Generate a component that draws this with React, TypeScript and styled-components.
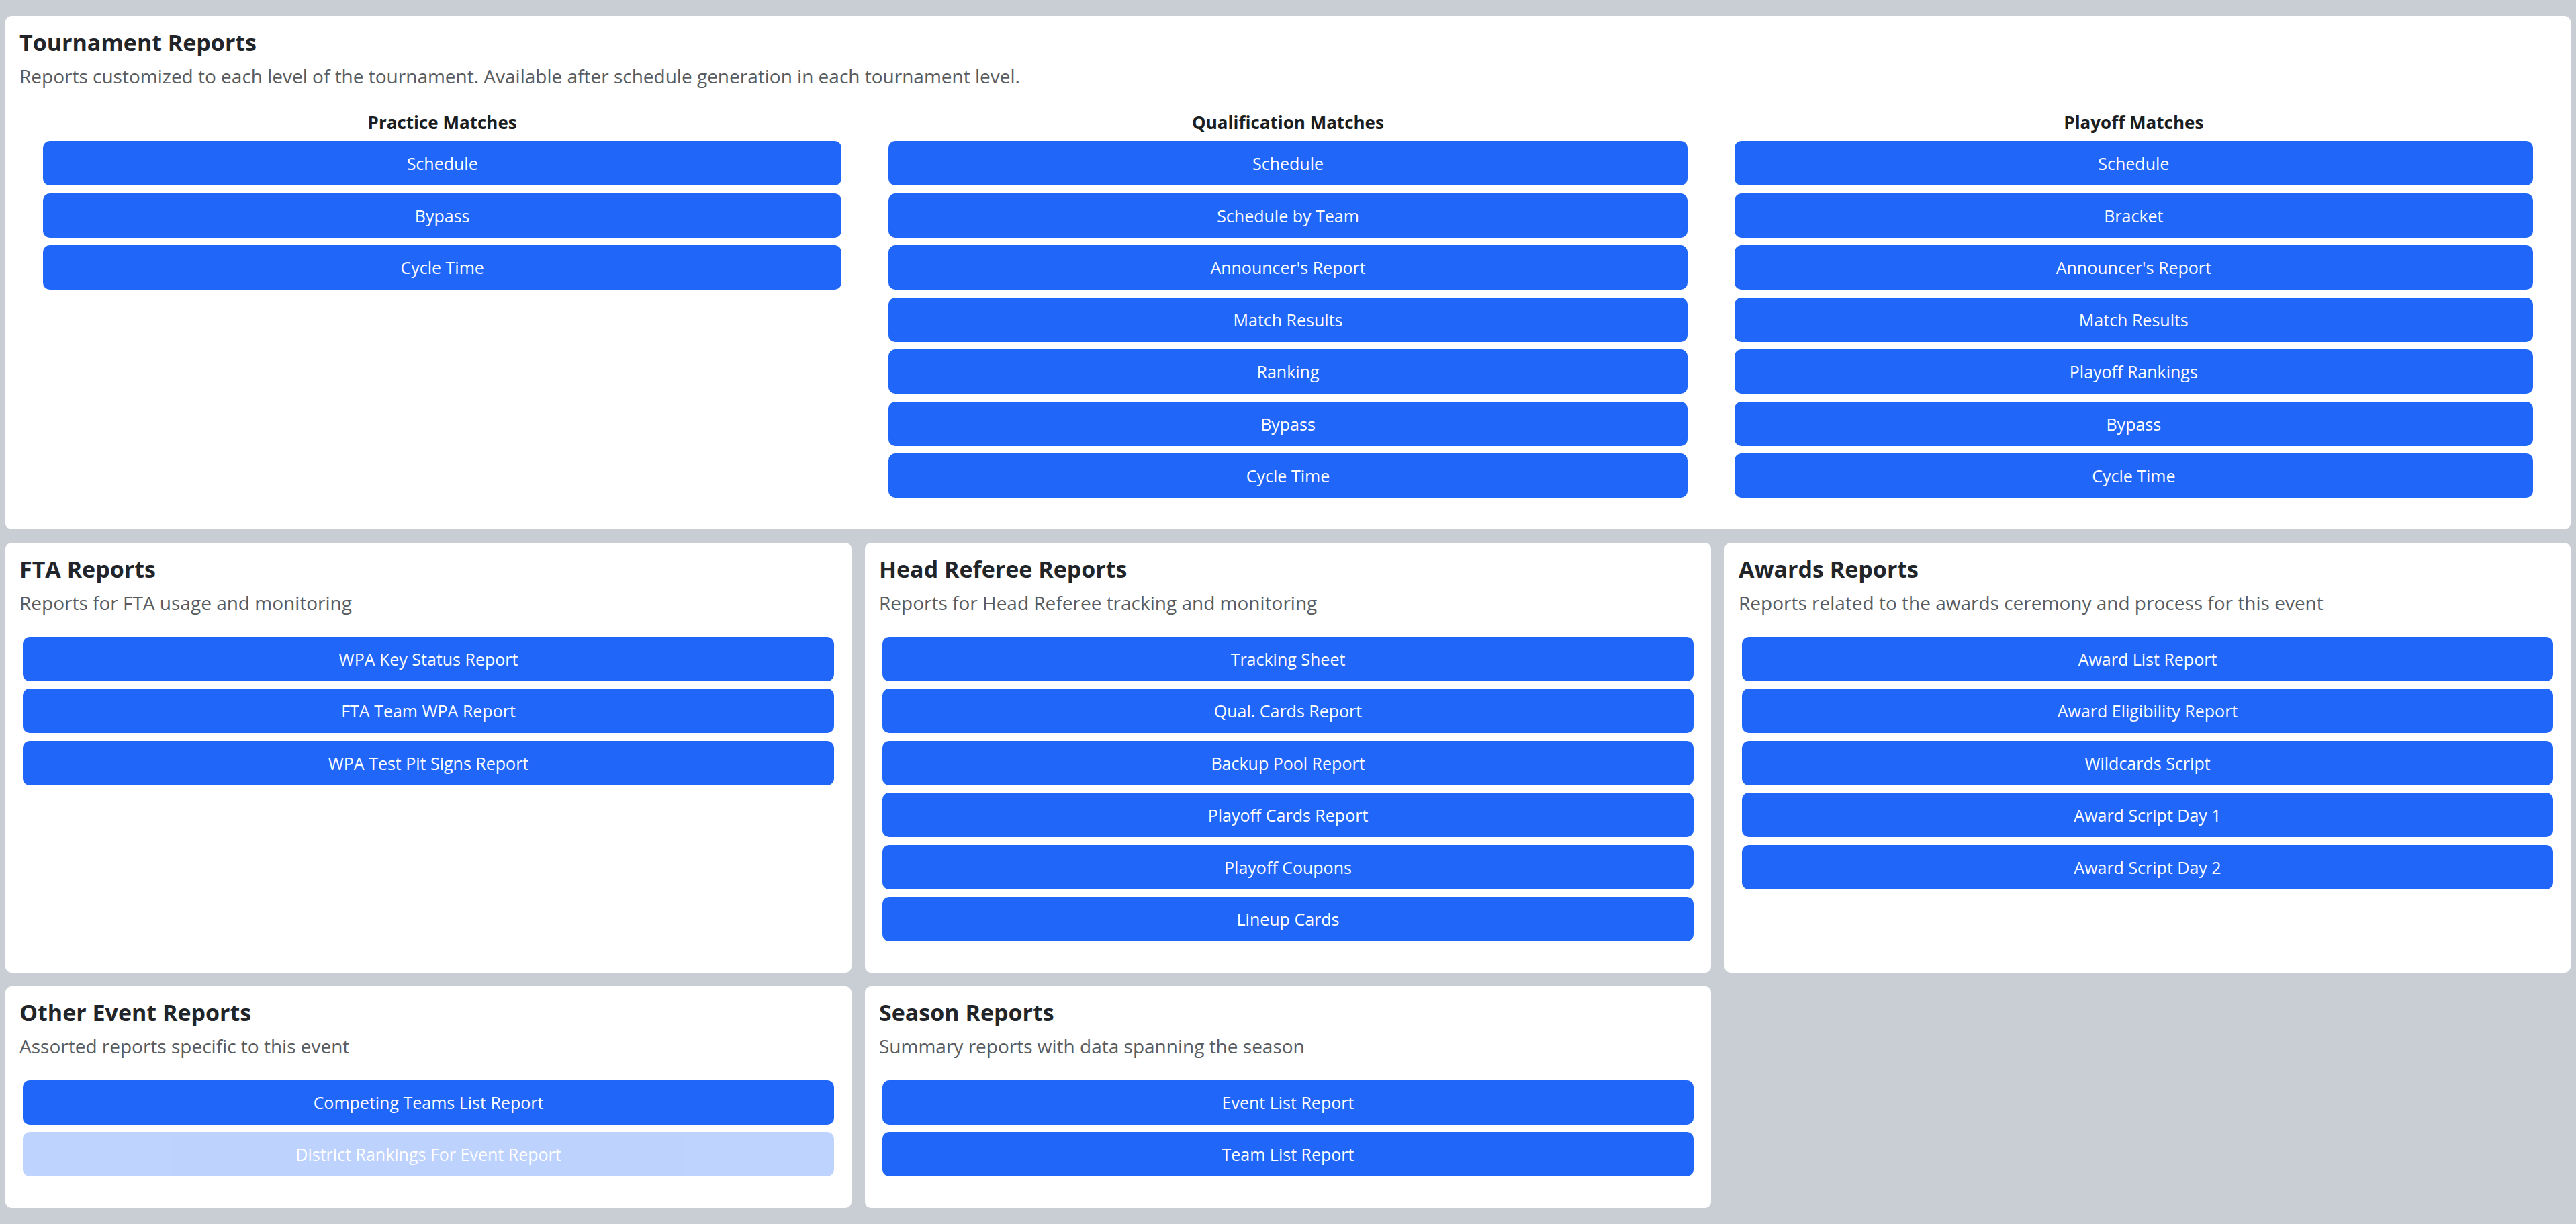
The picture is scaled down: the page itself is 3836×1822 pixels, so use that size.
import styled, { createGlobalStyle } from 'styled-components';

const GlobalStyle = createGlobalStyle`
  html, body { margin: 0; padding: 0; }
  body {
    background: #c9ced5;
    font-family: "Open Sans", "Noto Sans", Arial, sans-serif;
    color: #212529;
  }
`;

const Page = styled.div`
  min-height: 100vh;
  box-sizing: border-box;
  padding: 24px 8px 27px;
  display: flex;
  flex-direction: column;
  gap: 20px;
`;

const Card = styled.section`
  background: #fff;
  border-radius: 9px;
  padding: 17px 21px 35px;
  box-sizing: border-box;
  display: flex;
  flex-direction: column;
`;

const Title = styled.h2`
  margin: 0 0 8px;
  font-size: 34px;
  line-height: 44px;
  font-weight: 700;
  color: #212529;
`;

const Desc = styled.p`
  margin: 0 0 31px;
  font-size: 28px;
  line-height: 40px;
  color: #585c61;
`;

const Columns = styled.div`
  display: grid;
  grid-template-columns: repeat(3, 1fr);
`;

const Column = styled.div`
  padding: 0 35px;
  display: flex;
  flex-direction: column;
`;

const ColumnHead = styled.h3`
  margin: 0 0 10px;
  text-align: center;
  font-size: 26px;
  line-height: 36px;
  font-weight: 700;
  color: #1b1e21;
`;

const ButtonList = styled.div<{ $inset?: boolean }>`
  display: flex;
  flex-direction: column;
  padding: 0 ${(p) => (p.$inset ? '5px' : '0')};
`;

const ReportButton = styled.button`
  height: 66px;
  margin: 0 0 11.5px;
  border: none;
  border-radius: 10px;
  background: #1f66f9;
  color: #fff;
  font-family: inherit;
  font-size: 25px;
  cursor: pointer;
  &:disabled {
    opacity: 0.29;
    cursor: default;
  }
`;

const Grid = styled.div`
  display: grid;
  grid-template-columns: repeat(3, 1fr);
  gap: 20px;
`;

const tournament = [
  { head: 'Practice Matches', items: ['Schedule', 'Bypass', 'Cycle Time'] },
  {
    head: 'Qualification Matches',
    items: ['Schedule', 'Schedule by Team', "Announcer's Report", 'Match Results', 'Ranking', 'Bypass', 'Cycle Time'],
  },
  {
    head: 'Playoff Matches',
    items: ['Schedule', 'Bracket', "Announcer's Report", 'Match Results', 'Playoff Rankings', 'Bypass', 'Cycle Time'],
  },
];

type Section = { title: string; desc: string; items: string[]; disabled?: string[] };

const sections: Section[] = [
  {
    title: 'FTA Reports',
    desc: 'Reports for FTA usage and monitoring',
    items: ['WPA Key Status Report', 'FTA Team WPA Report', 'WPA Test Pit Signs Report'],
  },
  {
    title: 'Head Referee Reports',
    desc: 'Reports for Head Referee tracking and monitoring',
    items: ['Tracking Sheet', 'Qual. Cards Report', 'Backup Pool Report', 'Playoff Cards Report', 'Playoff Coupons', 'Lineup Cards'],
  },
  {
    title: 'Awards Reports',
    desc: 'Reports related to the awards ceremony and process for this event',
    items: ['Award List Report', 'Award Eligibility Report', 'Wildcards Script', 'Award Script Day 1', 'Award Script Day 2'],
  },
  {
    title: 'Other Event Reports',
    desc: 'Assorted reports specific to this event',
    items: ['Competing Teams List Report', 'District Rankings For Event Report'],
    disabled: ['District Rankings For Event Report'],
  },
  {
    title: 'Season Reports',
    desc: 'Summary reports with data spanning the season',
    items: ['Event List Report', 'Team List Report'],
  },
];

export default function App() {
  return (
    <>
      <GlobalStyle />
      <Page>
        <Card>
          <Title>Tournament Reports</Title>
          <Desc>Reports customized to each level of the tournament. Available after schedule generation in each tournament level.</Desc>
          <Columns>
            {tournament.map((col) => (
              <Column key={col.head}>
                <ColumnHead>{col.head}</ColumnHead>
                <ButtonList>
                  {col.items.map((it, i) => (
                    <ReportButton key={i}>{it}</ReportButton>
                  ))}
                </ButtonList>
              </Column>
            ))}
          </Columns>
        </Card>
        <Grid>
          {sections.map((s) => (
            <Card key={s.title}>
              <Title>{s.title}</Title>
              <Desc>{s.desc}</Desc>
              <ButtonList $inset>
                {s.items.map((it) => (
                  <ReportButton key={it} disabled={s.disabled?.includes(it)}>
                    {it}
                  </ReportButton>
                ))}
              </ButtonList>
            </Card>
          ))}
        </Grid>
      </Page>
    </>
  );
}
